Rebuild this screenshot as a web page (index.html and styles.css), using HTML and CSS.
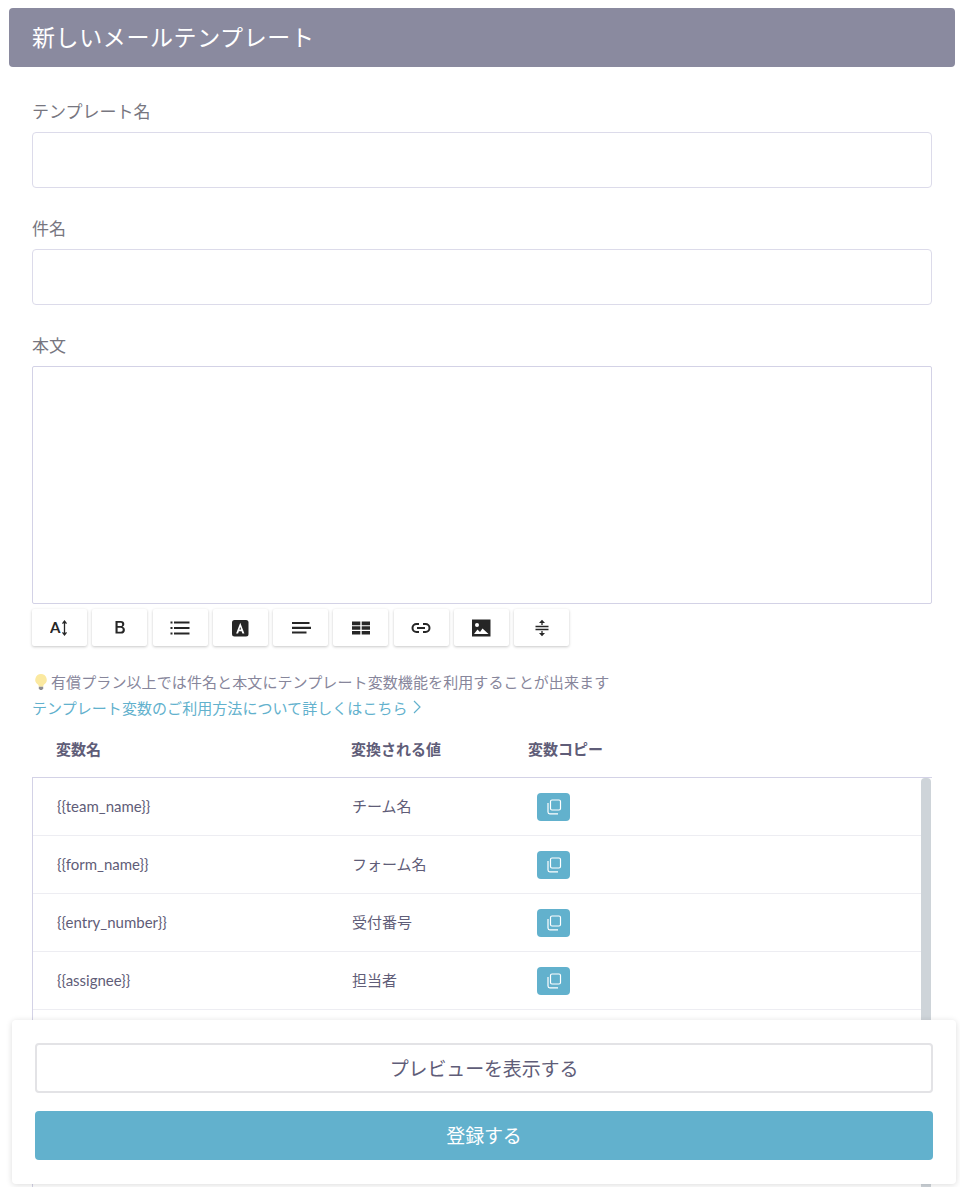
FILE: index.html
```html
<!DOCTYPE html>
<html lang="ja">
<head>
<meta charset="utf-8">
<title>新しいメールテンプレート</title>
<link rel="stylesheet" href="styles.css">
</head>
<body>
<div class="page">
  <header class="title-bar"><h1>新しいメールテンプレート</h1></header>
  <main class="form">
    <div class="field"><label class="label">テンプレート名</label><input class="input" type="text"></div>
    <div class="field"><label class="label">件名</label><input class="input" type="text"></div>
    <div class="field body-field"><label class="label">本文</label><textarea class="textarea"></textarea></div>
    <div class="toolbar">
      <button class="tool"><svg width="20" height="20" viewBox="0 0 20 20"><text x="0" y="15" class="tool-a">A</text><path d="M14.500 3v14M12.500 5.600 14.500 3l2 2.600M12.500 14.400 14.500 17l2-2.600" fill="none" stroke="#262626" stroke-width="1.300"/></svg></button>
      <button class="tool"><svg width="20" height="20" viewBox="0 0 20 20"><path d="M5.500 3h5.300c2.200 0 3.500 1.200 3.500 3.100 0 1.300-.7 2.200-1.800 2.700 1.400.4 2.400 1.500 2.400 3.100 0 2.300-1.600 3.700-3.900 3.700H5.500zM7.600 4.800v3.300h2.900c1.100 0 1.700-.6 1.700-1.700s-.6-1.600-1.700-1.600zM7.600 9.800v4h3.100c1.300 0 2-.8 2-2s-.7-2-2-2z" fill="#262626" fill-rule="evenodd"/></svg></button>
      <button class="tool"><svg width="20" height="20" viewBox="0 0 20 20"><path d="M4 4.500h15.500M4 10h15.500M4 15.500h15.500" stroke="#262626" stroke-width="2"/><path d="M.5 4.500h2M.5 10h2M.5 15.500h2" stroke="#262626" stroke-width="2"/></svg></button>
      <button class="tool"><svg width="18" height="18" viewBox="0 0 18 18"><rect x="1" y="1" width="16.500" height="16.500" rx="2.500" fill="#262626"/><path d="M9.250 3.800 13.400 14.500h-2l-.8-2.300H7.900l-.8 2.300h-2zM8.400 10.600h1.700L9.250 8z" fill="#fff" fill-rule="evenodd"/></svg></button>
      <button class="tool"><svg width="20" height="20" viewBox="0 0 20 20"><path d="M1 5h17.500M1 9.800h19M1 14.500h14.500" stroke="#262626" stroke-width="2.200"/></svg></button>
      <button class="tool"><svg width="20" height="20" viewBox="0 0 20 20"><path d="M1 3.500h8.300v3.700H1zM10.700 3.500H19v3.700h-8.300zM1 8.300h8.300v3.500H1zM10.700 8.300H19v3.500h-8.300zM1 12.900h8.300v3.500H1zM10.700 12.900H19v3.500h-8.300z" fill="#262626"/></svg></button>
      <button class="tool"><svg width="20" height="20" viewBox="0 0 20 20"><path d="M8 6H5.500a4 4 0 0 0 0 8H8M12 6h2.500a4 4 0 0 1 0 8H12M6 10h8" fill="none" stroke="#262626" stroke-width="2"/></svg></button>
      <button class="tool"><svg width="20" height="18" viewBox="0 0 20 18"><path d="M1 .5h18.500v17H1z" fill="#262626"/><circle cx="6" cy="6" r="2" fill="#fff"/><path d="M3 15l3.500-4.500L9 13l2.500-3.500L17.500 15z" fill="#fff"/></svg></button>
      <button class="tool"><svg width="20" height="20" viewBox="0 0 20 20"><path d="M3.500 8.500h13M3.500 11.500h13M10 3v4M10 13v4" stroke="#262626" stroke-width="1.300" fill="none"/><path d="M7 5 10 1.800 13 5zM7 15 10 18.200 13 15z" fill="#262626"/></svg></button>
    </div>
    <div class="notes">
      <p class="hint"><svg class="bulb" width="16" height="18" viewBox="0 0 16 18"><path d="M8 1a5.700 5.700 0 0 0-3.400 10.300c.8.700 1.100 1.400 1.200 2.400h4.400c.1-1 .4-1.700 1.200-2.400A5.700 5.700 0 0 0 8 1z" fill="#fbe9a0"/><path d="M5.800 13.800h4.400v1.800l-1.200 1.400H7l-1.200-1.400z" fill="#8d8d92"/></svg>有償プラン以上では件名と本文にテンプレート変数機能を利用することが出来ます</p>
      <a class="link" href="#">テンプレート変数のご利用方法について詳しくはこちら<svg class="chev" width="8" height="14" viewBox="0 0 8 14"><path d="M1 1l6 6-6 6" fill="none" stroke="#62b1cd" stroke-width="1.200"/></svg></a>
    </div>
    <div class="vars-head"><span class="col-name">変数名</span><span class="col-value">変換される値</span><span class="col-copy">変数コピー</span></div>
    <div class="vars">
      <div class="vars-rows">
        <div class="row"><span class="col-name">{{team_name}}</span><span class="col-value">チーム名</span><button class="copy"><svg width="16" height="16" viewBox="0 0 16 16"><rect x="4.500" y="1" width="10" height="10" rx="1.500" fill="none" stroke="#fff" stroke-width="1.200"/><path d="M2 4v9a1.800 1.800 0 0 0 1.800 1.800H12" fill="none" stroke="#fff" stroke-width="1.200"/></svg></button></div>
        <div class="row"><span class="col-name">{{form_name}}</span><span class="col-value">フォーム名</span><button class="copy"><svg width="16" height="16" viewBox="0 0 16 16"><rect x="4.500" y="1" width="10" height="10" rx="1.500" fill="none" stroke="#fff" stroke-width="1.200"/><path d="M2 4v9a1.800 1.800 0 0 0 1.800 1.800H12" fill="none" stroke="#fff" stroke-width="1.200"/></svg></button></div>
        <div class="row"><span class="col-name">{{entry_number}}</span><span class="col-value">受付番号</span><button class="copy"><svg width="16" height="16" viewBox="0 0 16 16"><rect x="4.500" y="1" width="10" height="10" rx="1.500" fill="none" stroke="#fff" stroke-width="1.200"/><path d="M2 4v9a1.800 1.800 0 0 0 1.800 1.800H12" fill="none" stroke="#fff" stroke-width="1.200"/></svg></button></div>
        <div class="row"><span class="col-name">{{assignee}}</span><span class="col-value">担当者</span><button class="copy"><svg width="16" height="16" viewBox="0 0 16 16"><rect x="4.500" y="1" width="10" height="10" rx="1.500" fill="none" stroke="#fff" stroke-width="1.200"/><path d="M2 4v9a1.800 1.800 0 0 0 1.800 1.800H12" fill="none" stroke="#fff" stroke-width="1.200"/></svg></button></div>
        <div class="row"></div>
      </div>
      <div class="scrollbar"></div>
    </div>
  </main>
  <footer class="actions">
    <button class="btn btn-outline">プレビューを表示する</button>
    <button class="btn btn-primary">登録する</button>
  </footer>
</div>
</body>
</html>
```

FILE: styles.css
```css
* { box-sizing: border-box; }
html, body { margin: 0; height: 100%; overflow: hidden; background: #fff; }
body { font-family: Lato, "Noto Sans CJK JP", sans-serif; color: #5f5d78; }
.page { position: relative; height: 1187px; padding: 8px 5px 0 9px; overflow: hidden; }
.title-bar { height: 59px; background: #8a8a9f; border-radius: 4px; padding: 0 23px 3px; display: flex; align-items: center; }
.title-bar h1 { margin: 0; font-size: 23px; font-weight: 400; color: #fff; letter-spacing: .6px; }
.form { width: 900px; margin-left: 23px; padding-top: 32px; }
.field { margin-bottom: 28px; }
.body-field { margin-bottom: 5px; }
.label { display: block; height: 25px; line-height: 25px; margin-bottom: 8px; font-size: 17px; color: #77767f; }
.input { display: block; width: 100%; height: 56px; border: 1px solid #dcdbea; border-radius: 4px; background: #fff; }
.textarea { display: block; width: 100%; height: 238px; border: 1px solid #d3d2e6; border-radius: 2px; background: #fff; resize: none; }
.toolbar { display: flex; gap: 5.250px; }
.tool { width: 55px; height: 37px; padding: 0; border: 0; border-radius: 2px; background: #fff; box-shadow: 0 1px 3px rgba(0,0,0,.22); display: flex; align-items: center; justify-content: center; }
.tool-a { font: 700 15px Lato, sans-serif; fill: #262626; }
.notes { margin-top: 23px; font-size: 15px; }
.hint { margin: 0; height: 26px; line-height: 26px; color: #87869b; letter-spacing: .1px; display: flex; align-items: center; }
.bulb { flex: none; margin: 0 2px 0 1px; }
.link { display: flex; align-items: center; height: 26px; padding-bottom: 2px; color: #62b1cd; text-decoration: none; letter-spacing: .06px; }
.chev { margin-left: 5px; }
.vars-head { display: flex; align-items: center; height: 56px; padding: 0 0 2px 24px; font-size: 15px; font-weight: 700; color: #5f5d78; }
.col-name { width: 295px; flex: none; }
.col-value { width: 177px; flex: none; }
.vars { display: flex; height: 420px; border: 1px solid #d3d2e6; border-right: 0; }
.vars-rows { flex: 1; min-width: 0; }
.row { display: flex; align-items: center; height: 58px; padding-left: 24px; border-bottom: 1px solid #ededf2; font-size: 15px; color: #5f5d78; }
.row .col-name, .row .col-value { margin-bottom: 2px; }
.copy { width: 33px; height: 28px; margin-left: 8px; padding: 0; border: 0; border-radius: 4px; background: #62b1cd; display: flex; align-items: center; justify-content: center; }
.scrollbar { width: 10px; flex: none; background: #ced4d9; border-radius: 4px 4px 0 0; margin-right: 1px; }
.actions { position: absolute; left: 12px; top: 1020px; width: 944px; height: 164px; padding: 23px 23px 0; background: #fff; border-radius: 4px; box-shadow: 0 1px 6px rgba(0,0,0,.14); display: flex; flex-direction: column; gap: 18px; }
.btn { display: block; width: 898px; height: 49px; padding-bottom: 3px; border-radius: 4px; font: 400 19px Lato, "Noto Sans CJK JP", sans-serif; letter-spacing: -.15px; }
.btn-outline { height: 50px; background: #fff; border: 2px solid #e3e3e6; color: #5f5d78; }
.btn-primary { background: #62b1cd; border: 0; color: #fff; }
```
